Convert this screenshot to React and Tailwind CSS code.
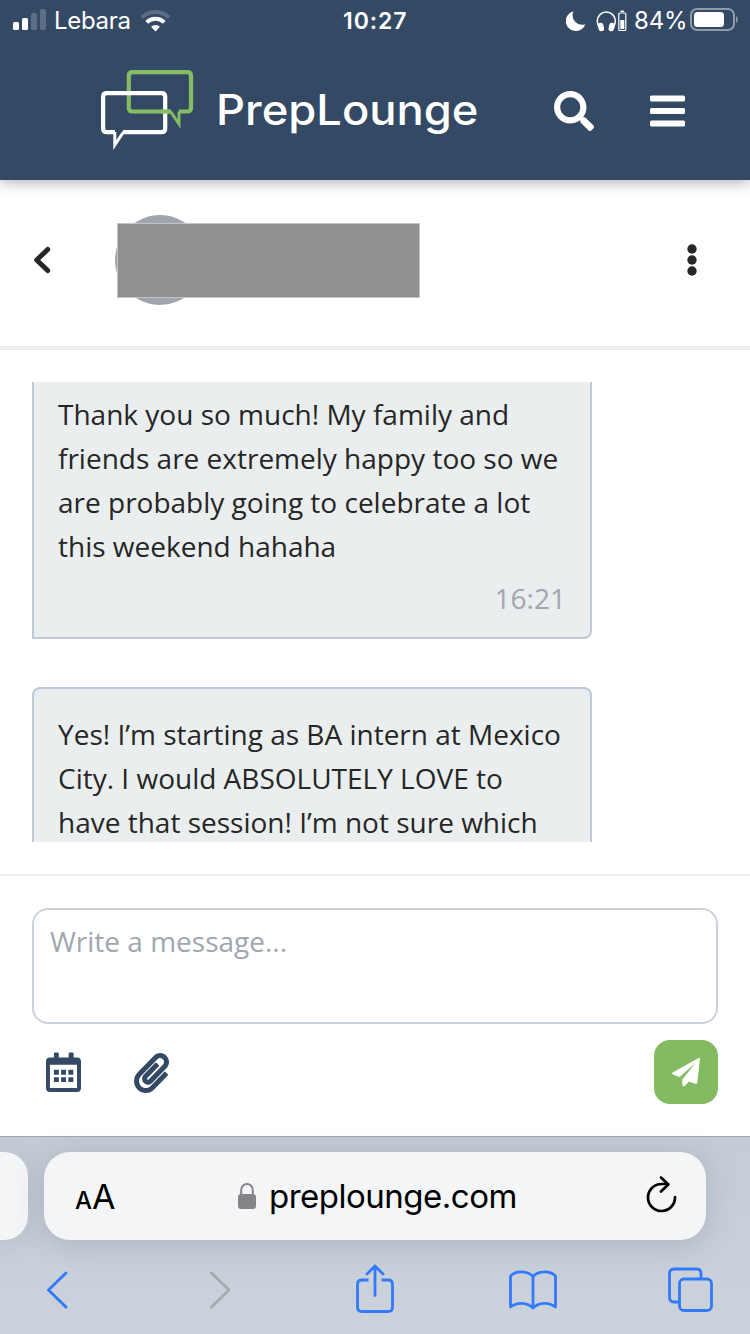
import React from 'react';
import { FaSearch, FaPaperclip } from 'react-icons/fa';

const messages = [
    {
        id: 1,
        lines: [
            'Thank you so much! My family and',
            'friends are extremely happy too so we',
            'are probably going to celebrate a lot',
            'this weekend hahaha'
        ],
        time: '16:21',
        bubble: 'rounded-br-lg border-x-2 border-b-2 pt-[10px] pb-[17px]'
    },
    {
        id: 2,
        lines: [
            'Yes! I’m starting as BA intern at Mexico',
            'City. I would ABSOLUTELY LOVE to',
            'have that session! I’m not sure which'
        ],
        bubble: 'mt-12 rounded-t-lg border-x-2 border-t-2 pt-[23px] pb-4'
    }
];

const StatusBar = () => (
    <div className="flex h-10 items-center pt-[2px] font-['Inter',sans-serif] text-white">
        <div className="flex w-[343px] items-center pl-[13px]">
            <svg className="-mt-[2px]" width="34" height="22" viewBox="0 0 34 22" fill="#fff">
                <rect x="0" y="13" width="6" height="8" rx="1.5" />
                <rect x="9" y="9" width="6" height="12" rx="1.5" />
                <rect x="18" y="4" width="6" height="17" rx="1.5" opacity=".2" />
                <rect x="27" y="0" width="6" height="21" rx="1.5" opacity=".2" />
            </svg>
            <span className="ml-[7px] w-[76px] text-[24px] leading-[38px] tracking-[-0.3px] whitespace-nowrap">Lebara</span>
            <svg className="-mt-[2px] ml-[10px]" width="31" height="23" viewBox="0 0 31 23" fill="none" stroke="#fff" strokeWidth="4">
                <path d="M2 8.5a19.2 19.2 0 0 1 27 0" opacity=".2" />
                <path d="M6.8 13.4a12.3 12.3 0 0 1 17.4 0" />
                <path d="M11 17.8a6.4 6.4 0 0 1 9 0L15.5 22.4z" fill="#fff" stroke="none" />
            </svg>
        </div>
        <span className="w-[223px] text-[23px] font-semibold tracking-[0.9px]">10:27</span>
        <svg className="-mt-px" width="20" height="22" viewBox="0 0 20 22" fill="#fff">
            <path d="M7.5 1.3A10 10 0 1 0 19.3 14.2A9.5 9.5 0 0 1 7.5 1.3z" />
        </svg>
        <svg className="-mt-px ml-[10px]" width="31" height="24" viewBox="0 0 31 24" fill="none" stroke="#fff" strokeWidth="1.5">
            <path d="M3 18C1.5 15.5 1.3 14 1.3 12a9 9 0 0 1 18 0c0 2-.2 3.500-1.700 6" />
            <rect x="3" y="14.500" width="4" height="7" rx="2" transform="rotate(-12 5 18)" fill="#fff" />
            <rect x="13.600" y="14.500" width="4" height="7" rx="2" transform="rotate(12 15.600 18)" fill="#fff" />
            <rect x="22.800" y="4" width="7" height="17.500" rx="1" strokeWidth="1.2" />
            <path d="M24.500 2.300h3.600" />
            <rect x="24.300" y="11" width="4" height="9" fill="#fff" stroke="none" />
        </svg>
        <span className="ml-[7px] w-[56px] text-[24px] tracking-[-0.2px] whitespace-nowrap">84%</span>
        <svg className="-mt-[2px]" width="49" height="24" viewBox="0 0 49 24">
            <rect x="1" y="1" width="43" height="21" rx="6" fill="none" stroke="#fff" strokeOpacity=".45" strokeWidth="2" />
            <rect x="4" y="4" width="30" height="15" rx="3.500" fill="#fff" />
            <path d="M46 8c2.500 1.500 2.500 5.500 0 7z" fill="#fff" opacity=".45" />
        </svg>
    </div>
);

const Logo = () => (
    <div className="flex items-center">
        <svg width="96" height="84" viewBox="0 0 96 84" fill="none">
            <path d="M71 43.500H32.500Q28.800 43.500 28.800 40V8Q28.800 4.200 32.500 4.200H87.300Q91 4.200 91 8V40Q91 43.500 87.300 43.500H79" stroke="#84bd63" strokeWidth="4.200" />
            <path d="M70.500 43.500L79 56V43.500" stroke="#84bd63" strokeWidth="3" />
            <path d="M15 64.200H6.700Q3.100 64.200 3.100 60.500V29Q3.100 25.200 6.700 25.200H61.700Q65.200 25.200 65.200 29V60.500Q65.200 64.200 61.700 64.200H23" stroke="#fff" strokeWidth="4.200" />
            <path d="M14.800 64V77L23.500 64" stroke="#fff" strokeWidth="3" />
            <path d="M61 43.500H71" stroke="#84bd63" strokeWidth="4.200" />
        </svg>
        <span className="ml-[20px] w-[260px] origin-left scale-x-[1.078] font-['Inter',sans-serif] text-[42px] leading-[60px] font-medium whitespace-nowrap text-white">
            PrepLounge
        </span>
    </div>
);

const ChatHeader = () => (
    <div className="flex h-[170px] items-center justify-between border-b-4 border-[#eaeeef] pb-[6px]">
        <div className="flex items-center pl-[33px]">
            <svg width="20" height="30" viewBox="0 0 20 30" fill="none" stroke="#262626" strokeWidth="5" strokeLinecap="round" strokeLinejoin="round">
                <path d="M14.700 4.500L3.700 15L14.700 25.500" />
            </svg>
            <div className="relative ml-[62px] h-[90px] w-[90px] rounded-full bg-[#a0a6b0]">
                <div className="absolute top-[8px] left-[2px] h-[75px] w-[303px] border border-[#c4c4c4] bg-[#909090]" />
            </div>
        </div>
        <svg className="mr-[52px]" width="12" height="32" viewBox="0 0 12 32" fill="#262626">
            <circle cx="6" cy="5" r="4.700" />
            <circle cx="6" cy="16" r="4.700" />
            <circle cx="6" cy="27" r="4.700" />
        </svg>
    </div>
);

const Message = ({ message }) => (
    <div className={`w-[560px] shrink-0 border-[#bdc9d6] bg-[#eaeeef] px-6 text-[28px] leading-[44px] text-[#262626] ${message.bubble}`}>
        {message.lines.map((line) => (
            <p key={line} className="whitespace-nowrap">{line}</p>
        ))}
        {message.time && <p className="mt-2 text-right text-[#a0a6b0]">{message.time}</p>}
    </div>
);

const Composer = () => (
    <div className="h-[262px] border-t-2 border-[#eaeeef] px-8 pt-8">
        <div className="h-[116px] rounded-2xl border-2 border-[#cdd3db] px-4 pt-[9px] text-[28px] leading-[44px] text-[#a0a6b0]">
            Write a message...
        </div>
        <div className="mt-4 flex h-16 items-center">
            <svg className="mt-px ml-[14px]" width="35" height="41" viewBox="0 0 35.500 41.500" fill="#344a64">
                <path
                    fillRule="evenodd"
                    d="M8 1.500q0-1 1-1h3q1 0 1 1V5.500H23V1.500q0-1 1-1h3q1 0 1 1V5.500h3.500q4 0 4 4V36.500q0 4-4 4H4q-4 0-4-4V9.500q0-4 4-4h4zM4 13V36.500h27.500V13z"
                />
                <path d="M8 18h5v5H8zM15.300 18h5v5h-5zM22.700 18h5v5h-5zM8 25.500h5v5H8zM15.300 25.500h5v5h-5zM22.700 25.500h5v5h-5z" />
            </svg>
            <FaPaperclip className="mt-[2px] ml-[53px] h-10 w-[35px] text-[#344a64]" preserveAspectRatio="none" />
            <div className="ml-auto flex h-16 w-16 items-center justify-center rounded-2xl bg-[#84bb62]">
                <svg width="30" height="30" viewBox="0 0 30 30" fill="#fff">
                    <path d="M27.700 1Q29.200.200 29 2L26.200 25.500Q26 27.300 24.300 26.800L18 24.500L13.500 29Q11.800 30 11.300 28V22.500L24.500 6L8.500 20L2 17.500Q0 16.300 2 15.300z" />
                </svg>
            </div>
        </div>
    </div>
);

const BrowserBar = () => (
    <div className="h-[198px] border-t border-[#9ca5b1] bg-linear-to-b from-[#c4ccd5] to-[#cbd2dc] pt-[15px] font-['Inter',sans-serif]">
        <div className="flex h-[88px]">
            <div className="w-7 rounded-r-[24px] bg-[#f3f5f7] shadow-[0_4px_24px_#7a869640]" />
            <div className="ml-4 flex w-[662px] items-center rounded-[26px] bg-[#f3f5f7] shadow-[0_4px_28px_#7a869660]">
                <div className="ml-[31px] flex w-[162px] items-baseline text-black">
                    <span className="w-[17px] text-[24px] font-medium">A</span>
                    <span className="text-[34px]">A</span>
                </div>
                <svg width="20" height="28" viewBox="0 0 20 28" fill="#858589">
                    <rect x="1" y="12" width="18" height="15" rx="3" />
                    <path d="M4.200 13V8a5.800 6 0 0 1 11.600 0v5" fill="none" stroke="#858589" strokeWidth="2" />
                </svg>
                <span className="mt-[2px] ml-[12px] w-[250px] text-[33px] tracking-[-0.5px] whitespace-nowrap text-black">preplounge.com</span>
                <svg className="-mt-[5px] ml-auto mr-[27px]" width="34" height="40" viewBox="0 0 34 40" fill="none" stroke="#000" strokeWidth="2.700" strokeLinecap="round" strokeLinejoin="round">
                    <path d="M30 23A13.500 13.500 0 1 1 16.500 10H23" />
                    <path d="M16 3.500L23.300 10.500L16 17.500" />
                </svg>
            </div>
        </div>
        <div className="flex h-[94px] items-center pt-[6px]">
            <svg className="ml-[45px]" width="25" height="40" viewBox="0 0 25 40" fill="none" stroke="#337afa" strokeWidth="3" strokeLinecap="round" strokeLinejoin="round">
                <path d="M21 3L3.500 20L21 37" />
            </svg>
            <svg className="ml-[137px]" width="25" height="40" viewBox="0 0 25 40" fill="none" stroke="#a7abb0" strokeWidth="3" strokeLinecap="round" strokeLinejoin="round">
                <path d="M4.500 3L22 20L4.500 37" />
            </svg>
            <svg className="-mt-[4px] ml-[122px]" width="42" height="52" viewBox="0 0 42 52" fill="none" stroke="#337afa" strokeWidth="2.800" strokeLinecap="round" strokeLinejoin="round">
                <path d="M14.500 18H8Q3.500 18 3.500 22.500V45Q3.500 49.500 8 49.500H34Q38.500 49.500 38.500 45V22.500Q38.500 18 34 18H27.500" strokeLinecap="butt" />
                <path d="M21 33.500V4M13 12L21 4L29 12" />
            </svg>
            <svg className="ml-[112px]" width="50" height="42" viewBox="0 0 50 42" fill="none" stroke="#337afa" strokeWidth="2.800" strokeLinejoin="round">
                <path d="M25 7.500C19 1.500 8 1.500 2.500 7V38C9 33 19 33 25 39C31 33 41 33 47.500 38V7C42 1.500 31 1.500 25 7.500z" />
                <path d="M25 7.500V39" />
            </svg>
            <svg className="ml-[109px]" width="48" height="48" viewBox="0 0 48 48" fill="none" stroke="#337afa" strokeWidth="2.800">
                <path d="M12 36H7Q2.500 36 2.500 31.500V7.500Q2.500 3 7 3H29.500Q34 3 34 7.500V12" />
                <rect x="12.500" y="13" width="32" height="31.500" rx="4.500" />
            </svg>
        </div>
    </div>
);

const App = () => {
    return (
        <div className="flex h-[1334px] w-[750px] flex-col overflow-hidden bg-white font-['Open_Sans',sans-serif]">
            <header className="z-10 h-[180px] shrink-0 bg-[#344a64] shadow-[0_2px_14px_#00000055]">
                <StatusBar />
                <div className="flex h-[140px] items-center pl-[100px]">
                    <Logo />
                    <FaSearch className="mt-[2px] ml-[78px] h-10 w-10 text-white" />
                    <svg className="mt-[2px] ml-[56px]" width="36" height="32" viewBox="0 0 36 32" fill="#fff">
                        <rect x="0" y="0.500" width="35" height="6" rx="1.500" />
                        <rect x="0" y="13" width="35" height="6" rx="1.500" />
                        <rect x="0" y="25.500" width="35" height="6" rx="1.500" />
                    </svg>
                </div>
            </header>

            <ChatHeader />

            {/* Conversation */}
            <div className="h-[524px] px-8 py-8">
                <div className="flex h-[460px] flex-col overflow-hidden">
                    {messages.map((message) => (
                        <Message key={message.id} message={message} />
                    ))}
                </div>
            </div>

            <Composer />
            <BrowserBar />
        </div>
    );
};

export default App;
